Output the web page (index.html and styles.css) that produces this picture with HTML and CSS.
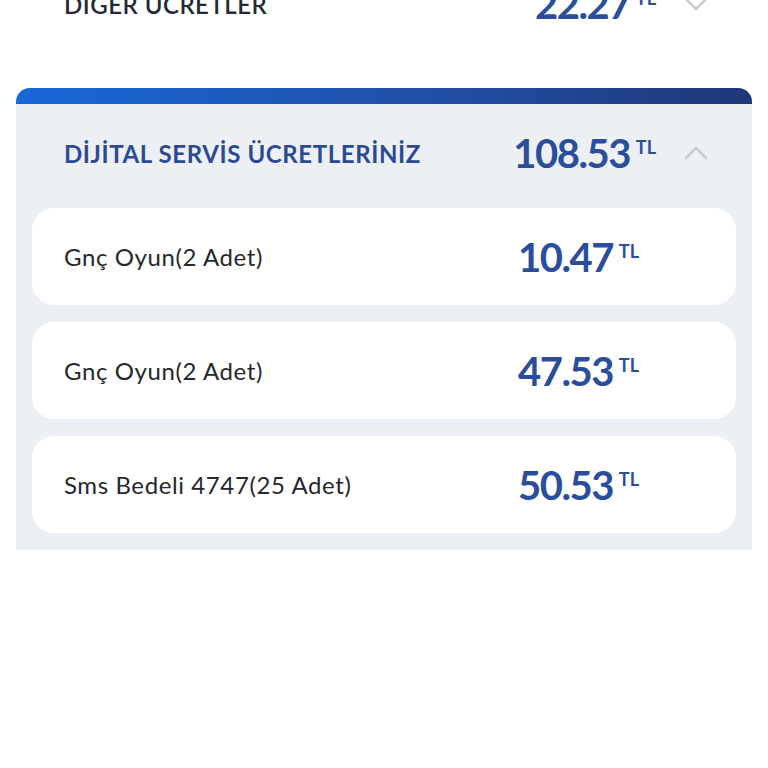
FILE: index.html
```html
<!DOCTYPE html>
<html lang="tr">

<head>
    <meta charset="UTF-8">
    <meta name="viewport" content="width=device-width, initial-scale=1.0">
    <title>Fatura detayı</title>
    <link rel="stylesheet" href="styles.css">
</head>

<body>
    <section class="page">
        <!-- collapsed group, scrolled partly out of view -->
        <div class="group-row">
            <div class="group-title">DİĞER ÜCRETLER</div>
            <div class="price">22.27<sup>TL</sup></div>
            <svg class="chevron" viewBox="0 0 24 14" width="24" height="14">
                <path d="M2 2 L12 12 L22 2" />
            </svg>
        </div>

        <div class="panel">
            <div class="panel-bar"></div>
            <div class="panel-head">
                <div class="panel-title">DİJİTAL SERVİS ÜCRETLERİNİZ</div>
                <div class="price">108.53<sup>TL</sup></div>
                <svg class="chevron" viewBox="0 0 24 14" width="24" height="14">
                    <path d="M2 12 L12 2 L22 12" />
                </svg>
            </div>
            <div class="items">
                <div class="item">
                    <div class="item-name">Gnç Oyun(2 Adet)</div>
                    <div class="price">10.47<sup>TL</sup></div>
                </div>
                <div class="item">
                    <div class="item-name">Gnç Oyun(2 Adet)</div>
                    <div class="price">47.53<sup>TL</sup></div>
                </div>
                <div class="item">
                    <div class="item-name">Sms Bedeli 4747(25 Adet)</div>
                    <div class="price">50.53<sup>TL</sup></div>
                </div>
            </div>
        </div>
    </section>
</body>

</html>
```

FILE: styles.css
```css
body {
    margin: 0;
    background-color: #ffffff;
    font-family: Lato, "Liberation Sans", sans-serif;
}

.page {
    padding: 0 16px;
}

.group-row {
    display: flex;
    align-items: center;
    height: 60px;
    margin-top: -26px;
    padding: 0 44px 0 48px;
}

.group-title {
    flex: 1;
    font-size: 24px;
    font-weight: 600;
    letter-spacing: 0.5px;
    color: #232a36;
}

.price {
    font-size: 40px;
    font-weight: 700;
    letter-spacing: -1.5px;
    color: #2a4e9c;
    line-height: 1;
}

.price sup {
    font-size: 18px;
    letter-spacing: 0;
    margin-left: 6px;
    vertical-align: 14px;
}

.chevron {
    margin-left: 28px;
    fill: none;
    stroke: #cbcbcb;
    stroke-width: 2.5;
    stroke-linecap: round;
    stroke-linejoin: round;
}

.panel {
    margin-top: 54px;
    background-color: #eceff3;
    border-radius: 14px 14px 0 0;
    overflow: hidden;
    padding-bottom: 17px;
}

.panel-bar {
    height: 16px;
    background: linear-gradient(90deg, #1767d8 0%, #2150a8 55%, #1f3778 100%);
}

.panel-head {
    display: flex;
    align-items: center;
    height: 104px;
    padding: 0 44px 6px 48px;
    box-sizing: border-box;
}

.panel-title {
    flex: 1;
    font-size: 24px;
    font-weight: 700;
    letter-spacing: 0.6px;
    color: #2b4a93;
}

.items {
    display: flex;
    flex-direction: column;
    gap: 17px;
    padding: 0 16px;
}

.item {
    display: flex;
    align-items: center;
    height: 97px;
    padding: 0 97px 0 32px;
    background-color: #ffffff;
    border-radius: 22px;
}

.item-name {
    flex: 1;
    font-size: 24px;
    letter-spacing: 0.6px;
    color: #25282d;
}
```
